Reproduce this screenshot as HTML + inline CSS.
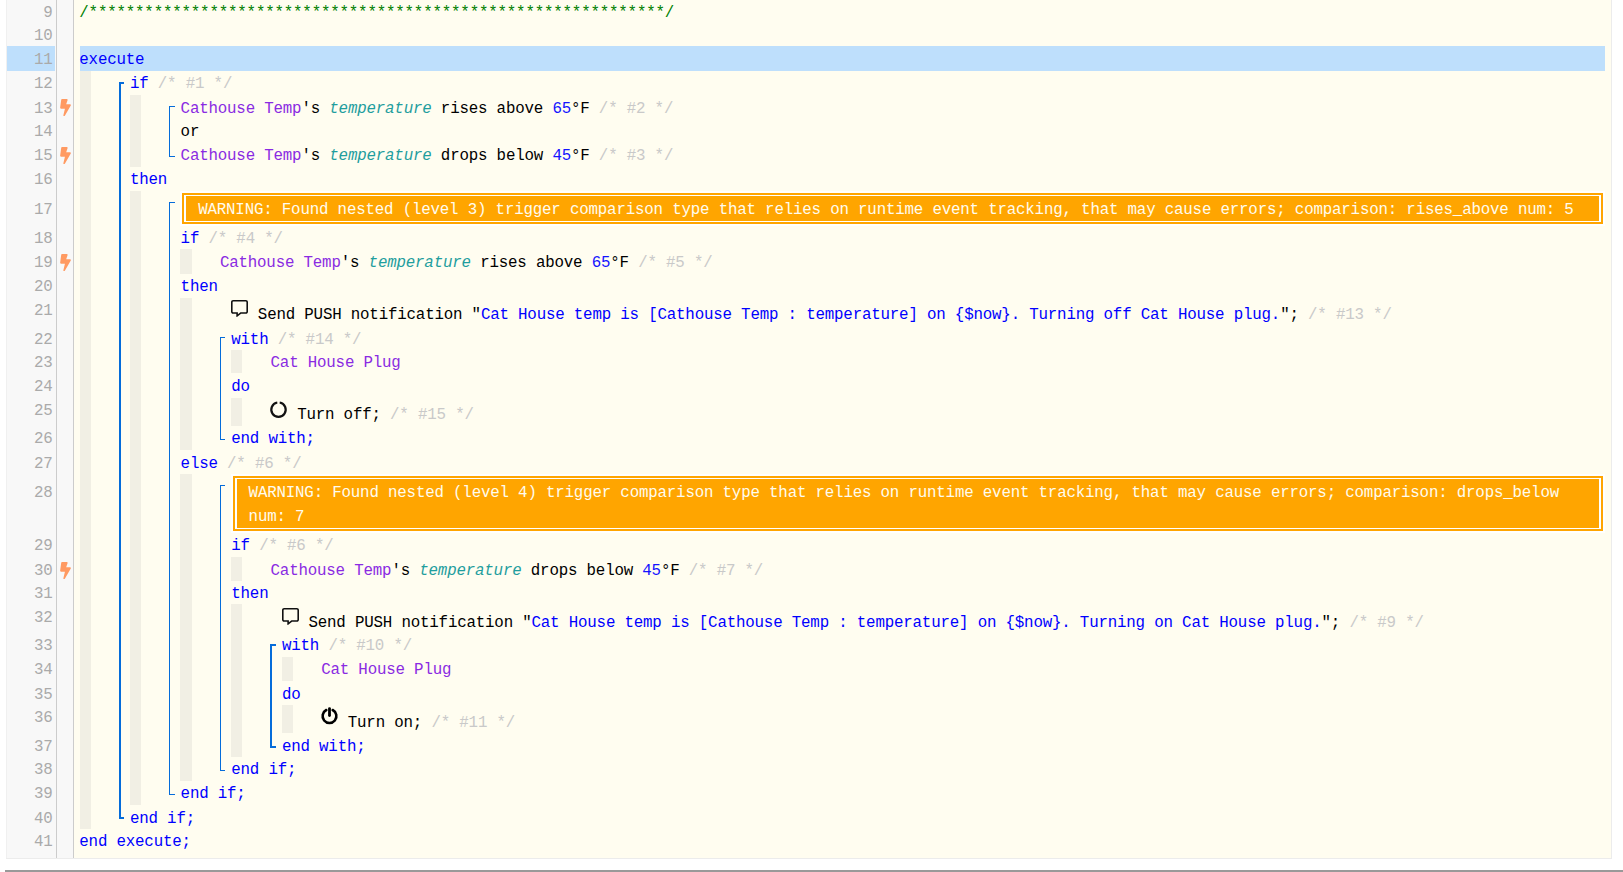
<!DOCTYPE html>
<html lang="en"><head><meta charset="utf-8"><title>webCoRE piston</title>
<style>
html,body{margin:0;padding:0;background:#fff;}
body{width:1623px;height:872px;position:relative;overflow:hidden;font-family:"Liberation Mono","DejaVu Sans Mono",monospace;font-size:15.8px;letter-spacing:-0.186px;}
#code{position:absolute;left:6px;top:0;width:1605px;height:858px;background:#fffdf0;border-right:1px solid #ececec;border-bottom:1px solid #ececec;overflow:hidden;}
#gut{position:absolute;left:0;top:0;width:66px;height:858px;background:#f8f8f8;border-left:1px solid #f0f0f0;border-right:1px solid #ccc;box-sizing:content-box;}
#gl{position:absolute;left:50px;top:0;width:1px;height:858px;background:#ccc;}
.hl{position:absolute;background:#bedffc;}
.ln{position:absolute;left:0;width:46.600px;text-align:right;color:#aaa;line-height:24px;height:24px;white-space:pre;}
.t{position:absolute;white-space:pre;line-height:24px;height:24px;color:#000;}
.k{color:#0000ff}.c{color:#c9c9c9}.d{color:#8a2be2}.a{color:#1f9e9e;font-style:italic}.n{color:#1414ff}.s{color:#0000ff}.g{color:#008000}
.gd{position:absolute;background:#f1efe4;}
.b{position:absolute;background:#056cda;}
.ic{display:inline-block;width:17px;height:17px;margin-right:0.3px;vertical-align:-1.500px;position:relative;top:-3.3px;fill:#111;overflow:visible;}
.bolt{position:absolute;left:54.300px;width:11px;height:17.200px;fill:#ff9a62;}
.w0{position:absolute;background:#fff;}
.w1{position:absolute;background:#ffa500;}
.wt{position:absolute;color:#fffcee;white-space:pre;line-height:24px;}
#bar{position:absolute;left:5px;top:870px;width:1618px;height:2px;background:#999;}
</style></head><body>
<div id="code">

<div id="gut"></div><div id="gl"></div>
<div class="hl" style="left:1px;top:46.0px;width:48px;height:25px"></div>
<div class="hl" style="left:74px;top:46.0px;width:1525px;height:25px"></div>
<div class="gd" style="left:74.00px;top:71.00px;width:11px;height:758.00px"></div>
<div class="gd" style="left:124.00px;top:95.00px;width:11px;height:72.00px"></div>
<div class="gd" style="left:124.00px;top:191.00px;width:11px;height:614.00px"></div>
<div class="gd" style="left:174.00px;top:249.00px;width:12px;height:25.00px"></div>
<div class="gd" style="left:174.00px;top:298.00px;width:12px;height:152.00px"></div>
<div class="gd" style="left:174.00px;top:474.00px;width:12px;height:307.00px"></div>
<div class="gd" style="left:225.00px;top:350.00px;width:11px;height:23.00px"></div>
<div class="gd" style="left:225.00px;top:398.00px;width:11px;height:28.00px"></div>
<div class="gd" style="left:225.00px;top:557.00px;width:11px;height:24.00px"></div>
<div class="gd" style="left:225.00px;top:604.00px;width:11px;height:153.00px"></div>
<div class="gd" style="left:276.00px;top:657.00px;width:11px;height:24.00px"></div>
<div class="gd" style="left:276.00px;top:705.00px;width:11px;height:28.00px"></div>
<div class="b" style="left:113px;top:82.00px;width:2px;height:737.00px"></div>
<div class="b" style="left:113px;top:82.00px;width:5px;height:2px"></div>
<div class="b" style="left:113px;top:817.00px;width:5px;height:2px"></div>
<div class="b" style="left:163px;top:106.00px;width:1px;height:51.00px"></div>
<div class="b" style="left:163px;top:106.00px;width:6px;height:1px"></div>
<div class="b" style="left:163px;top:156.00px;width:6px;height:1px"></div>
<div class="b" style="left:163px;top:202.00px;width:1px;height:593.00px"></div>
<div class="b" style="left:163px;top:202.00px;width:6px;height:1px"></div>
<div class="b" style="left:163px;top:794.00px;width:6px;height:1px"></div>
<div class="b" style="left:214px;top:337.00px;width:1px;height:103.00px"></div>
<div class="b" style="left:214px;top:337.00px;width:5px;height:1px"></div>
<div class="b" style="left:214px;top:439.00px;width:5px;height:1px"></div>
<div class="b" style="left:214px;top:485.00px;width:1px;height:286.00px"></div>
<div class="b" style="left:214px;top:485.00px;width:5px;height:1px"></div>
<div class="b" style="left:214px;top:770.00px;width:5px;height:1px"></div>
<div class="b" style="left:264px;top:644.00px;width:2px;height:104.00px"></div>
<div class="b" style="left:264px;top:644.00px;width:6px;height:2px"></div>
<div class="b" style="left:264px;top:746.00px;width:6px;height:2px"></div>
<div class="w0" style="left:174px;top:191px;width:1425px;height:35px"></div>
<div class="w1" style="left:176px;top:193px;width:1421.4px;height:31px"></div>
<div class="w0" style="left:178.3px;top:195.3px;width:1417.0px;height:26.4px"></div>
<div class="w1" style="left:180px;top:196.4px;width:1413px;height:24.2px"></div>
<div class="wt" style="left:192.20px;top:197.9px">WARNING: Found nested (level 3) trigger comparison type that relies on runtime event tracking, that may cause errors; comparison: rises_above num: 5</div>
<div class="w0" style="left:225px;top:474px;width:1374px;height:59px"></div>
<div class="w1" style="left:227px;top:476px;width:1370.4px;height:55px"></div>
<div class="w0" style="left:229.3px;top:478.3px;width:1366.0px;height:50.4px"></div>
<div class="w1" style="left:231px;top:479.4px;width:1362px;height:48.2px"></div>
<div class="wt" style="left:242.60px;top:480.9px">WARNING: Found nested (level 4) trigger comparison type that relies on runtime event tracking, that may cause errors; comparison: drops_below</div>
<div class="wt" style="left:242.60px;top:504.9px">num: 7</div>
<div class="ln" style="top:0.9px">9</div>
<div class="t" style="left:73.30px;top:0.9px"><span class="g">/**************************************************************/</span></div>
<div class="ln" style="top:23.9px">10</div>
<div class="ln" style="top:47.9px">11</div>
<div class="t" style="left:73.30px;top:47.9px"><span class="k">execute</span></div>
<div class="ln" style="top:71.9px">12</div>
<div class="t" style="left:123.95px;top:71.9px"><span class="k">if</span> <span class="c">/* #1 */</span></div>
<div class="ln" style="top:96.9px">13</div>
<svg class="bolt" style="top:99px" viewBox="0 0 320 512"><path d="M296 160H180.600l42.600-129.800C227.200 15 215.700 0 200 0H56C44 0 33.800 8.900 32.200 20.800l-32 240C-1.700 275.200 9.500 288 24 288h118.700L96.600 482.500c-3.600 15.200 8 29.500 23.300 29.500 8.400 0 16.400-4.400 20.800-12l176-304c9.300-15.900-2.200-36-20.700-36z"/></svg>
<div class="t" style="left:174.60px;top:96.9px"><span class="d">Cathouse Temp</span>'s <span class="a">temperature</span> rises above <span class="n">65</span>°F <span class="c">/* #2 */</span></div>
<div class="ln" style="top:119.9px">14</div>
<div class="t" style="left:174.60px;top:119.9px">or</div>
<div class="ln" style="top:143.9px">15</div>
<svg class="bolt" style="top:147px" viewBox="0 0 320 512"><path d="M296 160H180.600l42.600-129.800C227.200 15 215.700 0 200 0H56C44 0 33.800 8.900 32.200 20.800l-32 240C-1.700 275.200 9.500 288 24 288h118.700L96.600 482.500c-3.600 15.200 8 29.500 23.300 29.500 8.400 0 16.400-4.400 20.800-12l176-304c9.300-15.900-2.200-36-20.700-36z"/></svg>
<div class="t" style="left:174.60px;top:143.9px"><span class="d">Cathouse Temp</span>'s <span class="a">temperature</span> drops below <span class="n">45</span>°F <span class="c">/* #3 */</span></div>
<div class="ln" style="top:167.9px">16</div>
<div class="t" style="left:123.95px;top:167.9px"><span class="k">then</span></div>
<div class="ln" style="top:197.9px">17</div>
<div class="ln" style="top:226.9px">18</div>
<div class="t" style="left:174.60px;top:226.9px"><span class="k">if</span> <span class="c">/* #4 */</span></div>
<div class="ln" style="top:250.9px">19</div>
<svg class="bolt" style="top:254px" viewBox="0 0 320 512"><path d="M296 160H180.600l42.600-129.800C227.200 15 215.700 0 200 0H56C44 0 33.800 8.900 32.200 20.800l-32 240C-1.700 275.200 9.500 288 24 288h118.700L96.600 482.500c-3.600 15.200 8 29.500 23.300 29.500 8.400 0 16.400-4.400 20.800-12l176-304c9.300-15.900-2.200-36-20.700-36z"/></svg>
<div class="t" style="left:213.90px;top:250.9px"><span class="d">Cathouse Temp</span>'s <span class="a">temperature</span> rises above <span class="n">65</span>°F <span class="c">/* #5 */</span></div>
<div class="ln" style="top:274.9px">20</div>
<div class="t" style="left:174.60px;top:274.9px"><span class="k">then</span></div>
<div class="ln" style="top:298.9px">21</div>
<div class="t" style="left:225.25px;top:302.9px"><svg class="ic" viewBox="0 0 512 512"><path d="M448 0H64C28.700 0 0 28.700 0 64v288c0 35.300 28.700 64 64 64h96v84c0 7.100 5.800 12 12 12 2.400 0 4.900-.7 7.100-2.400L304 416h144c35.300 0 64-28.700 64-64V64c0-35.300-28.700-64-64-64zm16 352c0 8.800-7.200 16-16 16H288l-12.800 9.600L208 428v-60H64c-8.800 0-16-7.200-16-16V64c0-8.800 7.200-16 16-16h384c8.800 0 16 7.200 16 16v288z"/></svg> Send PUSH notification "<span class="s">Cat House temp is [Cathouse Temp : temperature] on {$now}. Turning off Cat House plug.</span>"; <span class="c">/* #13 */</span></div>
<div class="ln" style="top:327.9px">22</div>
<div class="t" style="left:225.25px;top:327.9px"><span class="k">with</span> <span class="c">/* #14 */</span></div>
<div class="ln" style="top:350.9px">23</div>
<div class="t" style="left:264.55px;top:350.9px"><span class="d">Cat House Plug</span></div>
<div class="ln" style="top:374.9px">24</div>
<div class="t" style="left:225.25px;top:374.9px"><span class="k">do</span></div>
<div class="ln" style="top:398.9px">25</div>
<div class="t" style="left:264.55px;top:402.9px"><svg class="ic" style="top:-2.8px;left:-0.9px" viewBox="0 0 17 17"><path d="M7.300 1.500A7.200 7.200 0 1 0 9.700 1.500" fill="none" stroke="#111" stroke-width="2.200"/></svg> Turn off; <span class="c">/* #15 */</span></div>
<div class="ln" style="top:426.9px">26</div>
<div class="t" style="left:225.25px;top:426.9px"><span class="k">end with;</span></div>
<div class="ln" style="top:451.9px">27</div>
<div class="t" style="left:174.60px;top:451.9px"><span class="k">else</span> <span class="c">/* #6 */</span></div>
<div class="ln" style="top:480.9px">28</div>
<div class="ln" style="top:533.9px">29</div>
<div class="t" style="left:225.25px;top:533.9px"><span class="k">if</span> <span class="c">/* #6 */</span></div>
<div class="ln" style="top:558.9px">30</div>
<svg class="bolt" style="top:562px" viewBox="0 0 320 512"><path d="M296 160H180.600l42.600-129.800C227.200 15 215.700 0 200 0H56C44 0 33.800 8.900 32.200 20.800l-32 240C-1.700 275.200 9.500 288 24 288h118.700L96.600 482.500c-3.600 15.200 8 29.500 23.300 29.500 8.400 0 16.400-4.400 20.800-12l176-304c9.300-15.900-2.200-36-20.700-36z"/></svg>
<div class="t" style="left:264.55px;top:558.9px"><span class="d">Cathouse Temp</span>'s <span class="a">temperature</span> drops below <span class="n">45</span>°F <span class="c">/* #7 */</span></div>
<div class="ln" style="top:581.9px">31</div>
<div class="t" style="left:225.25px;top:581.9px"><span class="k">then</span></div>
<div class="ln" style="top:605.9px">32</div>
<div class="t" style="left:275.90px;top:610.9px"><svg class="ic" viewBox="0 0 512 512"><path d="M448 0H64C28.700 0 0 28.700 0 64v288c0 35.300 28.700 64 64 64h96v84c0 7.100 5.800 12 12 12 2.400 0 4.900-.7 7.100-2.400L304 416h144c35.300 0 64-28.700 64-64V64c0-35.300-28.700-64-64-64zm16 352c0 8.800-7.200 16-16 16H288l-12.800 9.600L208 428v-60H64c-8.800 0-16-7.200-16-16V64c0-8.800 7.200-16 16-16h384c8.800 0 16 7.200 16 16v288z"/></svg> Send PUSH notification "<span class="s">Cat House temp is [Cathouse Temp : temperature] on {$now}. Turning on Cat House plug.</span>"; <span class="c">/* #9 */</span></div>
<div class="ln" style="top:633.9px">33</div>
<div class="t" style="left:275.90px;top:633.9px"><span class="k">with</span> <span class="c">/* #10 */</span></div>
<div class="ln" style="top:657.9px">34</div>
<div class="t" style="left:315.20px;top:657.9px"><span class="d">Cat House Plug</span></div>
<div class="ln" style="top:682.9px">35</div>
<div class="t" style="left:275.90px;top:682.9px"><span class="k">do</span></div>
<div class="ln" style="top:705.9px">36</div>
<div class="t" style="left:315.20px;top:710.9px"><svg class="ic" style="top:-4.2px" viewBox="0 0 17 17"><path d="M5.300 3.000A6.900 6.900 0 1 0 11.700 3.000" fill="none" stroke="#000" stroke-width="2.600" stroke-linecap="round"/><path d="M8.500 1.600V8.600" fill="none" stroke="#000" stroke-width="2.800" stroke-linecap="round"/></svg> Turn on; <span class="c">/* #11 */</span></div>
<div class="ln" style="top:734.9px">37</div>
<div class="t" style="left:275.90px;top:734.9px"><span class="k">end with;</span></div>
<div class="ln" style="top:757.9px">38</div>
<div class="t" style="left:225.25px;top:757.9px"><span class="k">end if;</span></div>
<div class="ln" style="top:781.9px">39</div>
<div class="t" style="left:174.60px;top:781.9px"><span class="k">end if;</span></div>
<div class="ln" style="top:806.9px">40</div>
<div class="t" style="left:123.95px;top:806.9px"><span class="k">end if;</span></div>
<div class="ln" style="top:829.9px">41</div>
<div class="t" style="left:73.30px;top:829.9px"><span class="k">end execute;</span></div>
</div>
<div id="bar"></div>
</body></html>
